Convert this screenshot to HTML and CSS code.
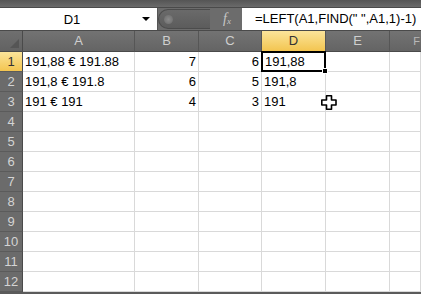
FILE: index.html
```html
<!DOCTYPE html>
<html>
<head>
	<meta charset="UTF-8">
	<title>Sheet</title>
	<link rel="stylesheet" href="styles.css">
</head>
<body>
	<div class="app">
		<div class="topstrip"></div>
		<div class="fbar">
			<div class="namebox">
				<span class="name">D1</span>
				<span class="drop"></span>
			</div>
			<div class="mid">
				<div class="grip"><span class="dot"></span></div>
				<span class="fx">f<sub>x</sub></span>
			</div>
			<div class="formula">=LEFT(A1,FIND(" ",A1,1)-1)</div>
		</div>
		<div class="gap"></div>
		<div class="sheet">
			<div class="corner"><span class="tri"></span></div>
			<div class="ch">A</div>
			<div class="ch">B</div>
			<div class="ch">C</div>
			<div class="ch sel">D</div>
			<div class="ch">E</div>
			<div class="ch last">F</div>

			<div class="rh sel">1</div>
			<div class="c">191,88 € 191.88</div>
			<div class="c num">7</div>
			<div class="c num">6</div>
			<div class="c active">191,88<span class="handle"></span></div>
			<div class="c"></div>
			<div class="c"></div>

			<div class="rh">2</div>
			<div class="c">191,8 € 191.8</div>
			<div class="c num">6</div>
			<div class="c num">5</div>
			<div class="c">191,8</div>
			<div class="c"></div>
			<div class="c"></div>

			<div class="rh">3</div>
			<div class="c">191 € 191</div>
			<div class="c num">4</div>
			<div class="c num">3</div>
			<div class="c">191</div>
			<div class="c">
				<svg class="cursor" width="16" height="15" viewBox="0 0 16 15">
					<path d="M5.5 0.8h5v4.2h4.5v5h-4.5v4.2h-5v-4.2h-4.7v-5h4.7z" fill="#fff" stroke="#000" stroke-width="1.6" stroke-linejoin="round"/>
				</svg>
			</div>
			<div class="c"></div>

			<div class="rh">4</div><div class="c"></div><div class="c"></div><div class="c"></div><div class="c"></div><div class="c"></div><div class="c"></div>
			<div class="rh">5</div><div class="c"></div><div class="c"></div><div class="c"></div><div class="c"></div><div class="c"></div><div class="c"></div>
			<div class="rh">6</div><div class="c"></div><div class="c"></div><div class="c"></div><div class="c"></div><div class="c"></div><div class="c"></div>
			<div class="rh">7</div><div class="c"></div><div class="c"></div><div class="c"></div><div class="c"></div><div class="c"></div><div class="c"></div>
			<div class="rh">8</div><div class="c"></div><div class="c"></div><div class="c"></div><div class="c"></div><div class="c"></div><div class="c"></div>
			<div class="rh">9</div><div class="c"></div><div class="c"></div><div class="c"></div><div class="c"></div><div class="c"></div><div class="c"></div>
			<div class="rh">10</div><div class="c"></div><div class="c"></div><div class="c"></div><div class="c"></div><div class="c"></div><div class="c"></div>
			<div class="rh">11</div><div class="c"></div><div class="c"></div><div class="c"></div><div class="c"></div><div class="c"></div><div class="c"></div>
			<div class="rh">12</div><div class="c"></div><div class="c"></div><div class="c"></div><div class="c"></div><div class="c"></div><div class="c"></div>
		</div>
	</div>
</body>
</html>
```

FILE: styles.css
```css
* {
	margin: 0;
	padding: 0;
	box-sizing: border-box;
}

body {
	background: #fff;
	overflow: hidden;
	font-family: "Liberation Sans", Arial, sans-serif;
}

.app {
	width: 421px;
	height: 294px;
	background: #5b5b5b;
	overflow: hidden;
}

.topstrip {
	height: 8px;
	background: linear-gradient(#555, #6a6a6a);
	border-bottom: 1px solid #4a4a4a;
}

.fbar {
	display: flex;
	height: 22px;
}

.namebox {
	width: 157px;
	background: #fff;
	display: flex;
	align-items: center;
}

.name {
	flex: 1;
	text-align: center;
	font-size: 13px;
	color: #000;
	padding-left: 2px;
}

.drop {
	width: 0;
	height: 0;
	border-left: 4px solid transparent;
	border-right: 4px solid transparent;
	border-top: 4px solid #000;
	margin-right: 7px;
}

.mid {
	width: 85px;
	background: #6c6c6c;
	display: flex;
	align-items: center;
	border-left: 1px solid #555;
}

.grip {
	width: 52px;
	height: 20px;
	border-radius: 10px 0 0 10px;
	background: linear-gradient(#6a6a6a, #5c5c5c);
	border: 1px solid #4c4c4c;
	border-right: none;
	display: flex;
	align-items: center;
	padding-left: 5px;
}

.dot {
	width: 9px;
	height: 9px;
	border-radius: 50%;
	background: radial-gradient(#8a8a8a, #6a6a6a);
}

.fx {
	font-family: "Liberation Serif", serif;
	font-style: italic;
	color: #c8c8c8;
	font-size: 14px;
	margin-left: 13px;
}

.fx sub {
	font-size: 9px;
	vertical-align: -1px;
}

.formula {
	flex: 1;
	background: #fff;
	font-size: 13px;
	line-height: 22px;
	padding-left: 13px;
	color: #000;
	white-space: nowrap;
}

.gap {
	height: 1px;
	background: #4a4a4a;
}

.sheet {
	display: grid;
	grid-template-columns: 23px 112px 64px 63px 64px 64px 31px;
	grid-template-rows: 21px repeat(12, 20px);
	background: #fff;
}

.corner {
	background: linear-gradient(#6f6f6f, #626262);
	border-right: 1px solid #4a4a4a;
	border-bottom: 1px solid #4a4a4a;
	position: relative;
}

.tri {
	position: absolute;
	right: 3px;
	bottom: 3px;
	width: 0;
	height: 0;
	border-left: 9px solid transparent;
	border-bottom: 9px solid #555;
}

.ch {
	background: linear-gradient(#737373, #646464);
	border-right: 1px solid #565656;
	border-bottom: 1px solid #4a4a4a;
	color: #cfcfcf;
	font-size: 13px;
	text-align: center;
	line-height: 20px;
}

.ch.sel {
	background: linear-gradient(#fbe49a, #f3c550);
	color: #333;
	border-bottom: 1px solid #c9a13b;
}

.ch.last {
	border-right: none;
	color: #b8b8b8;
	text-align: right;
	padding-right: 1px;
	font-size: 11px;
}

.rh {
	background: #6b6b6b;
	border-right: 1px solid #4a4a4a;
	border-bottom: 1px solid #5b5b5b;
	color: #d4d4d4;
	font-size: 13px;
	text-align: center;
	line-height: 19px;
}

.rh.sel {
	background: linear-gradient(#fbe49a, #f3c550);
	color: #333;
}

.c {
	border-right: 1px solid #d9d9d9;
	border-bottom: 1px solid #d9d9d9;
	font-size: 13px;
	line-height: 19px;
	padding: 0 2px;
	color: #000;
	white-space: nowrap;
	position: relative;
}

.c.num {
	text-align: right;
}

.c.active {
	border: 2px solid #000;
	margin: -1px 0 0 -1px;
	width: 65px;
	height: 21px;
	line-height: 17px;
	padding-left: 2px;
	z-index: 2;
}

.handle {
	position: absolute;
	right: -4px;
	bottom: -4px;
	width: 6px;
	height: 6px;
	background: #000;
	border: 1px solid #fff;
}

.cursor {
	position: absolute;
	left: -5px;
	top: 3px;
}
```
